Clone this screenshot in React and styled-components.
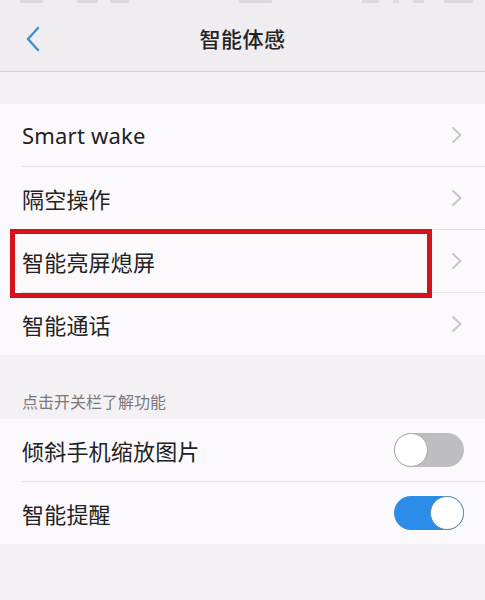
import React from 'react'
import styled, { createGlobalStyle } from 'styled-components'

const GlobalStyle = createGlobalStyle`
    html, body {
        margin: 0;
        padding: 0;
        background: #f4f1f5;
        font-family: "Noto Sans", "Noto Sans CJK SC", sans-serif;
        -webkit-font-smoothing: antialiased;
    }
`

const Page = styled.div`
    width: 485px;
    min-height: 600px;
    background: #f4f1f5;
`

const StatusBar = styled.div`
    height: 6px;
    overflow: hidden;
    display: flex;
    align-items: flex-start;
    padding: 0 12px 0 20px;
    background: #f0edf1;
`

const StatusMark = styled.span`
    display: block;
    width: ${p => p.w}px;
    height: 3px;
    margin-left: ${p => p.gap}px;
    background: #dcd8dd;
    border-radius: 0 0 1px 1px;
`

const NavBar = styled.div`
    height: 65px;
    display: flex;
    align-items: center;
    justify-content: center;
    position: relative;
    background: #f0edf1;
    border-bottom: 1px solid #d6d3d7;
`

const BackButton = styled.div`
    position: absolute;
    left: 22px;
    top: 19px;
    width: 22px;
    height: 28px;
    display: flex;
    align-items: center;
    justify-content: center;
`

const Title = styled.h1`
    margin: 0 0 2px;
    font-size: 21px;
    font-weight: 500;
    color: #222;
    letter-spacing: 0.5px;
`

const Gap = styled.div`
    height: ${p => p.h}px;
    background: #f4f1f5;
`

const Group = styled.div`
    background: #fcf9fd;
`

const Row = styled.div`
    position: relative;
    height: 62px;
    display: flex;
    align-items: center;
    justify-content: space-between;
    margin-left: 22px;
    padding-right: 22px;
    border-bottom: ${p => (p.last ? 'none' : '1px solid #e4e1e5')};
`

const RowLabel = styled.span`
    font-size: 22px;
    color: #222;
    letter-spacing: 0.2px;
`

const Highlight = styled.div`
    position: absolute;
    left: -12px;
    top: -1px;
    width: 422px;
    height: 69px;
    box-sizing: border-box;
    border: 5px solid #d4121b;
    pointer-events: none;
`

const SectionHeader = styled.div`
    height: 64px;
    box-sizing: border-box;
    padding: 39px 0 0 22px;
    font-size: 16px;
    color: #7a787b;
    line-height: 1;
`

const Switch = styled.div`
    width: 70px;
    height: 34px;
    border-radius: 17px;
    box-sizing: border-box;
    background: ${p => (p.on ? '#2b8de8' : '#bebdbf')};
    position: relative;
    margin-right: -1px;
`

const Knob = styled.div`
    position: absolute;
    top: 0;
    ${p => (p.on ? 'right: 0;' : 'left: 0;')}
    width: 34px;
    height: 34px;
    border-radius: 50%;
    box-sizing: border-box;
    background: #fff;
    border: 1.5px solid ${p => (p.on ? '#6f8e92' : '#a9a8aa')};
`

const Chevron = () => (
    <svg width="12" height="18" viewBox="0 0 12 18">
        <path d="M2 2 L9.5 9 L2 16" fill="none" stroke="#c6c4c7" strokeWidth="2" strokeLinecap="round" strokeLinejoin="round" />
    </svg>
)

const BackIcon = () => (
    <svg width="16" height="26" viewBox="0 0 16 26">
        <path d="M13 2 L3 13 L13 24" fill="none" stroke="#3f8fd2" strokeWidth="2.4" strokeLinecap="round" strokeLinejoin="round" />
    </svg>
)

const statusMarks = [
    { w: 24, gap: 0 }, { w: 22, gap: 34 }, { w: 20, gap: 12 },
    { w: 34, gap: 110 }, { w: 18, gap: 90 }, { w: 6, gap: 14 },
    { w: 12, gap: 14 }, { w: 30, gap: 20 },
]

const links = ['Smart wake', '隔空操作', '智能亮屏熄屏', '智能通话']
const toggles = [
    { label: '倾斜手机缩放图片', on: false },
    { label: '智能提醒', on: true },
]

export default function App() {
    return (
        <Page>
            <GlobalStyle />
            <StatusBar>
                {statusMarks.map((m, i) => (
                    <StatusMark key={i} w={m.w} gap={m.gap} />
                ))}
            </StatusBar>
            <NavBar>
                <BackButton><BackIcon /></BackButton>
                <Title>智能体感</Title>
            </NavBar>
            <Gap h={32} />
            <Group>
                {links.map((label, i) => (
                    <Row key={label} last={i === links.length - 1}>
                        <RowLabel>{label}</RowLabel>
                        <Chevron />
                        {i === 2 && <Highlight />}
                    </Row>
                ))}
            </Group>
            <SectionHeader>点击开关栏了解功能</SectionHeader>
            <Group>
                {toggles.map((t, i) => (
                    <Row key={t.label} last={i === toggles.length - 1}>
                        <RowLabel>{t.label}</RowLabel>
                        <Switch on={t.on}>
                            <Knob on={t.on} />
                        </Switch>
                    </Row>
                ))}
            </Group>
        </Page>
    )
}
